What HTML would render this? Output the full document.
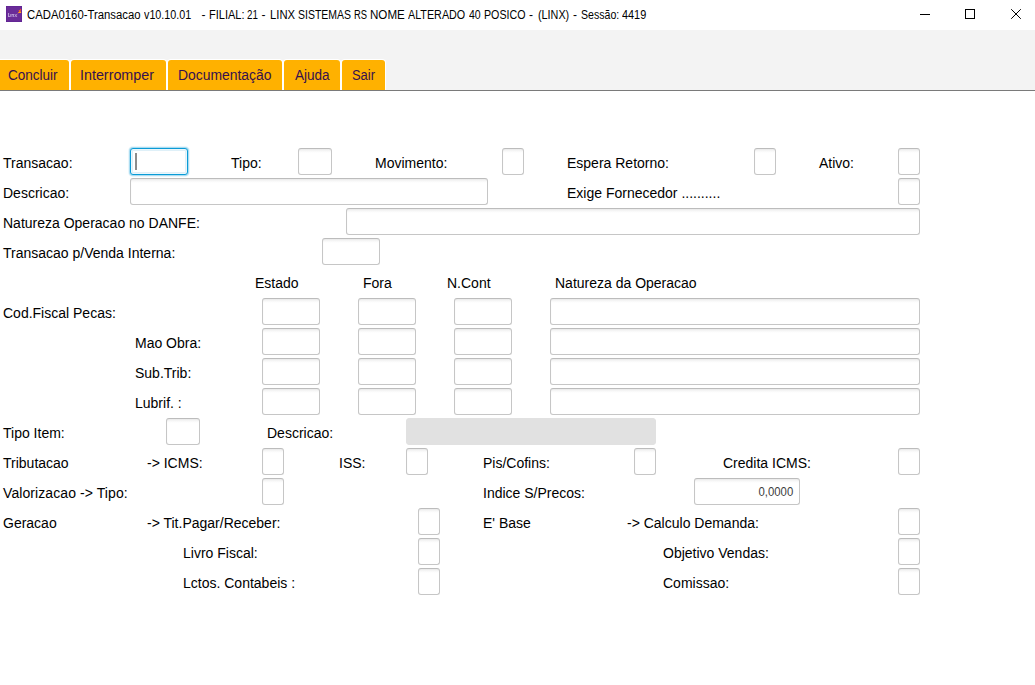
<!DOCTYPE html>
<html><head><meta charset="utf-8"><title>CADA0160-Transacao</title>
<style>
html,body{margin:0;padding:0}
body{width:1035px;height:685px;position:relative;overflow:hidden;background:#fff;font-family:"Liberation Sans",sans-serif;}
.titlebar{position:absolute;left:0;top:0;width:1035px;height:30px;background:#fff}
.titlebar .t span{position:absolute;top:0;line-height:30px;font-size:12px;color:#000;white-space:nowrap;transform-origin:0 50%}
.icon{position:absolute;left:6px;top:6px;width:16px;height:16px}
.band{position:absolute;left:0;top:30px;width:1035px;height:60px;background:#f3f3f3}
.line{position:absolute;left:0;top:90px;width:1035px;height:1px;background:#7a7a7a}
.b{position:absolute;top:60px;height:30px;background:#ffb100;border-radius:3px 3px 0 0;color:#35104f;font-size:13.5px;line-height:29px;text-align:center;white-space:nowrap;box-shadow:0 0 0 1px #fff}
.bt{position:absolute;top:60px;height:30px;line-height:30px;font-size:14px;color:#35104f;white-space:nowrap;transform-origin:0 50%}
.l{position:absolute;font-size:14px;line-height:30px;height:30px;color:#000;white-space:nowrap}
.i{position:absolute;height:27px;box-sizing:border-box;border:1px solid #c6c6c6;border-top-color:#bcbcbc;border-radius:3px;background:#fff linear-gradient(to bottom,#e8e8e8 0,#f1f1f1 1px,#f7f7f7 2px,#fcfcfc 3px,#fff 4px);box-shadow:inset 1px 0 1px -1px rgba(0,0,0,.08)}
.i.f{border-color:#0a9bd6;background:#fff;box-shadow:inset 0 0 0 1px #eaf6fb,inset 0 0 0 2px #dff0f8,0 0 0 1px rgba(10,155,214,.28),0 0 0 2px rgba(10,155,214,.09)}
.i.d{background:#e1e1e1;background-image:none;border-color:#e1e1e1;box-shadow:none}
.i.n span{position:absolute;right:5.4px;top:0;font-size:12.5px;color:#3e3e3e;line-height:26px;transform-origin:100% 50%;transform:scaleX(.908)}
.caret{position:absolute;left:4px;top:4px;width:2px;height:17px;background:#8c8c8c}
.wc{position:absolute;left:0;top:0}
</style></head><body>
<div class="titlebar">
<svg class="icon" viewBox="0 0 16 16"><rect width="16" height="16" fill="#5c2092"/><rect x="0.5" y="0.5" width="15" height="15" fill="#6a2c98"/>
<g fill="#c9b3e4" opacity=".9"><rect x="2.1" y="7" width="1" height="3.9"/><rect x="2.1" y="10" width="1.8" height=".9"/><rect x="4.3" y="8.1" width=".8" height="2.8"/><rect x="5.6" y="8.1" width=".8" height="2.8"/><rect x="5.6" y="8.1" width="2" height=".8"/><rect x="7" y="8.1" width=".8" height="2.8"/><path d="M8.2 8.1h.9l.7 1 .7-1h.9l-1.15 1.4 1.15 1.4h-.9l-.7-1-.7 1h-.9l1.15-1.4z"/></g>
<path d="M10.8 8.6l1.6-1.9" stroke="#a0409a" stroke-width=".7" fill="none"/>
<path d="M12.2 6.9l.9-1.5-.5-1.1 1.5-.2.7-.9.5.6-.9.9.8 1.6-.5.6z" fill="#ff6a1a"/><circle cx="14.5" cy="3.4" r=".65" fill="#ee3f3a"/><rect x="12.3" y="6" width="2.8" height="1" fill="#ffa31c"/></svg>
<div class="t"><span style="left:26.9px;transform:scaleX(0.9445)">CADA0160-Transacao</span><span style="left:144.4px;transform:scaleX(0.8968)">v10.10.01</span><span style="left:201.5px;transform:scaleX(1.0)">-</span><span style="left:208.68px;transform:scaleX(0.9189)">FILIAL:</span><span style="left:247.4px;transform:scaleX(0.8154)">21</span><span style="left:261.5px;transform:scaleX(1.0)">-</span><span style="left:269.66px;transform:scaleX(0.9385)">LINX</span><span style="left:297.74px;transform:scaleX(0.8737)">SISTEMAS</span><span style="left:353.86px;transform:scaleX(0.7818)">RS</span><span style="left:369.63px;transform:scaleX(0.9657)">NOME</span><span style="left:408.0px;transform:scaleX(0.8969)">ALTERADO</span><span style="left:469.0px;transform:scaleX(0.8769)">40</span><span style="left:483.71px;transform:scaleX(0.8889)">POSICO</span><span style="left:529.1px;transform:scaleX(1.0)">-</span><span style="left:538.0px;transform:scaleX(0.9)">(LINX)</span><span style="left:573.1px;transform:scaleX(1.0)">-</span><span style="left:580.52px;transform:scaleX(0.881)">Sessão:</span><span style="left:622.0px;transform:scaleX(0.9077)">4419</span></div>
<svg class="wc" width="1035" height="30" viewBox="0 0 1035 30" shape-rendering="crispEdges"><rect x="920" y="14" width="10" height="1" fill="#000"/><rect x="965.5" y="9.5" width="9" height="9" fill="none" stroke="#000" stroke-width="1"/><g shape-rendering="auto" stroke="#000" stroke-width="1"><path d="M1011.2 9.2l9.6 9.6M1020.8 9.2l-9.6 9.6"/></g></svg>
</div>
<div class="band"></div>
<div class="b" style="left:-3px;width:72px"></div>
<div class="b" style="left:71px;width:95px"></div>
<div class="b" style="left:168px;width:114px"></div>
<div class="b" style="left:284px;width:56px"></div>
<div class="b" style="left:342px;width:43px"></div>
<span class="bt" style="left:8.4px;transform:scaleX(0.9654)">Concluir</span><span class="bt" style="left:80.38px;transform:scaleX(1.0222)">Interromper</span><span class="bt" style="left:178.01px;transform:scaleX(0.9925)">Documentação</span><span class="bt" style="left:294.5px;transform:scaleX(0.9667)">Ajuda</span><span class="bt" style="left:351.58px;transform:scaleX(0.9208)">Sair</span>
<div class="line"></div>
<div class="l" style="left:3px;top:148px">Transacao:</div>
<div class="l" style="left:231px;top:148px">Tipo:</div>
<div class="l" style="left:375px;top:148px">Movimento:</div>
<div class="l" style="left:567px;top:148px">Espera Retorno:</div>
<div class="l" style="left:819px;top:148px">Ativo:</div>
<div class="l" style="left:3px;top:178px">Descricao:</div>
<div class="l" style="left:567px;top:178px">Exige Fornecedor ..........</div>
<div class="l" style="left:3px;top:208px">Natureza Operacao no DANFE:</div>
<div class="l" style="left:3px;top:238px">Transacao p/Venda Interna:</div>
<div class="l" style="left:255px;top:268px">Estado</div>
<div class="l" style="left:363px;top:268px">Fora</div>
<div class="l" style="left:447px;top:268px">N.Cont</div>
<div class="l" style="left:555px;top:268px">Natureza da Operacao</div>
<div class="l" style="left:3px;top:298px">Cod.Fiscal Pecas:</div>
<div class="l" style="left:135px;top:328px">Mao Obra:</div>
<div class="l" style="left:135px;top:358px">Sub.Trib:</div>
<div class="l" style="left:135px;top:388px">Lubrif. :</div>
<div class="l" style="left:3px;top:418px">Tipo Item:</div>
<div class="l" style="left:267px;top:418px">Descricao:</div>
<div class="l" style="left:3px;top:448px">Tributacao</div>
<div class="l" style="left:147px;top:448px">-&gt; ICMS:</div>
<div class="l" style="left:339px;top:448px">ISS:</div>
<div class="l" style="left:483px;top:448px">Pis/Cofins:</div>
<div class="l" style="left:723px;top:448px">Credita ICMS:</div>
<div class="l" style="left:3px;top:478px;letter-spacing:.085px">Valorizacao -&gt; Tipo:</div>
<div class="l" style="left:483px;top:478px">Indice S/Precos:</div>
<div class="l" style="left:3px;top:508px">Geracao</div>
<div class="l" style="left:147px;top:508px">-&gt; Tit.Pagar/Receber:</div>
<div class="l" style="left:483px;top:508px">E' Base</div>
<div class="l" style="left:627px;top:508px">-&gt; Calculo Demanda:</div>
<div class="l" style="left:183px;top:538px">Livro Fiscal:</div>
<div class="l" style="left:663px;top:538px">Objetivo Vendas:</div>
<div class="l" style="left:183px;top:568px">Lctos. Contabeis :</div>
<div class="l" style="left:663px;top:568px">Comissao:</div>
<div class="i f" style="left:130px;top:148px;width:58px"><i class="caret"></i></div>
<div class="i " style="left:298px;top:148px;width:34px"></div>
<div class="i " style="left:502px;top:148px;width:22px"></div>
<div class="i " style="left:754px;top:148px;width:22px"></div>
<div class="i " style="left:898px;top:148px;width:22px"></div>
<div class="i " style="left:130px;top:178px;width:358px"></div>
<div class="i " style="left:898px;top:178px;width:22px"></div>
<div class="i " style="left:346px;top:208px;width:574px"></div>
<div class="i " style="left:322px;top:238px;width:58px"></div>
<div class="i " style="left:262px;top:298px;width:58px"></div>
<div class="i " style="left:358px;top:298px;width:58px"></div>
<div class="i " style="left:454px;top:298px;width:58px"></div>
<div class="i " style="left:550px;top:298px;width:370px"></div>
<div class="i " style="left:262px;top:328px;width:58px"></div>
<div class="i " style="left:358px;top:328px;width:58px"></div>
<div class="i " style="left:454px;top:328px;width:58px"></div>
<div class="i " style="left:550px;top:328px;width:370px"></div>
<div class="i " style="left:262px;top:358px;width:58px"></div>
<div class="i " style="left:358px;top:358px;width:58px"></div>
<div class="i " style="left:454px;top:358px;width:58px"></div>
<div class="i " style="left:550px;top:358px;width:370px"></div>
<div class="i " style="left:262px;top:388px;width:58px"></div>
<div class="i " style="left:358px;top:388px;width:58px"></div>
<div class="i " style="left:454px;top:388px;width:58px"></div>
<div class="i " style="left:550px;top:388px;width:370px"></div>
<div class="i " style="left:166px;top:418px;width:34px"></div>
<div class="i d" style="left:406px;top:418px;width:250px"></div>
<div class="i " style="left:262px;top:448px;width:22px"></div>
<div class="i " style="left:406px;top:448px;width:22px"></div>
<div class="i " style="left:634px;top:448px;width:22px"></div>
<div class="i " style="left:898px;top:448px;width:22px"></div>
<div class="i " style="left:262px;top:478px;width:22px"></div>
<div class="i n" style="left:694px;top:478px;width:106px"><span>0,0000</span></div>
<div class="i " style="left:418px;top:508px;width:22px"></div>
<div class="i " style="left:898px;top:508px;width:22px"></div>
<div class="i " style="left:418px;top:538px;width:22px"></div>
<div class="i " style="left:898px;top:538px;width:22px"></div>
<div class="i " style="left:418px;top:568px;width:22px"></div>
<div class="i " style="left:898px;top:568px;width:22px"></div>
</body></html>
